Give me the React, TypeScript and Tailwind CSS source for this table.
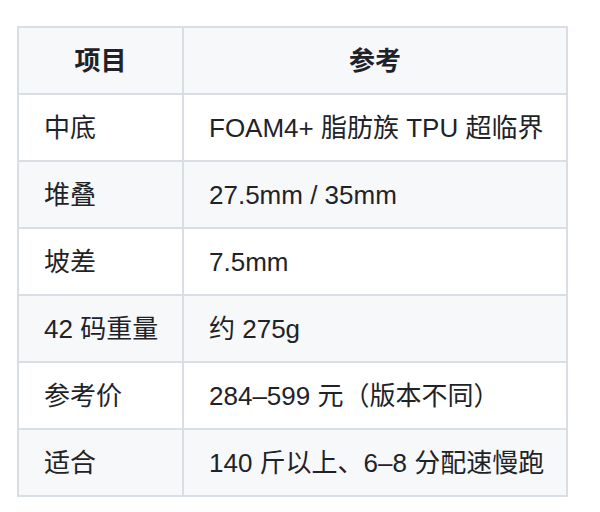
const ROWS: [string, string][] = [
  ["中底", "FOAM4+ 脂肪族 TPU 超临界"],
  ["堆叠", "27.5mm / 35mm"],
  ["坡差", "7.5mm"],
  ["42 码重量", "约 275g"],
  ["参考价", "284–599 元（版本不同）"],
  ["适合", "140 斤以上、6–8 分配速慢跑"],
]

export default function App() {
  return (
    <div
      className="w-[600px] h-[512px] bg-white pt-[26px] pl-[17px] text-[#1f2328]"
      style={{ fontFamily: '"Liberation Sans", "Noto Sans CJK SC", sans-serif' }}
    >
      <table className="border-collapse text-[26px] leading-none">
        <thead>
          <tr className="bg-[#f6f8fa] h-[67px]">
            <th className="w-[165px] border-2 border-[#d8dee4] font-bold text-center">项目</th>
            <th className="w-[384px] border-2 border-[#d8dee4] font-bold text-center">参考</th>
          </tr>
        </thead>
        <tbody>
          {ROWS.map(([k, v], i) => (
            <tr key={k} className={`h-[67px] ${i % 2 === 1 ? "bg-[#f6f8fa]" : "bg-white"}`}>
              <td className="border-2 border-[#d8dee4] pl-[25px] whitespace-nowrap">{k}</td>
              <td className="border-2 border-[#d8dee4] pl-[25px] whitespace-nowrap">{v}</td>
            </tr>
          ))}
        </tbody>
      </table>
    </div>
  )
}
